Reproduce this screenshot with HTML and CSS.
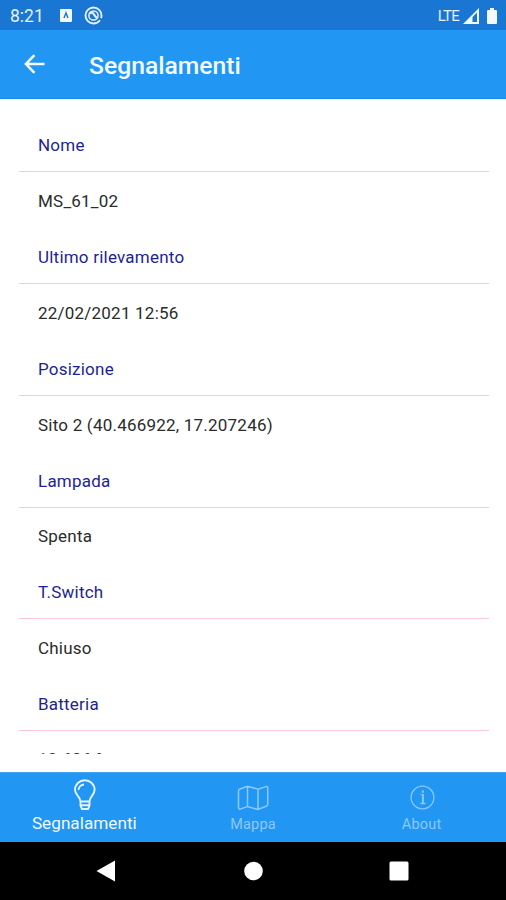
FILE: index.html
```html
<!DOCTYPE html>
<html lang="it">
<head>
<meta charset="utf-8">
<title>Segnalamenti</title>
<link rel="stylesheet" href="styles.css">
</head>
<body>
<div class="screen">
  <div class="status">
    <span class="clock">8:21</span>
    <svg class="app-badge" width="12" height="13" viewBox="0 0 12 13"><rect width="12" height="13" rx="1" fill="#f2f8fe"/><path d="M4 9 6 4l2 5" fill="none" stroke="#1976d2" stroke-width="1.4"/></svg>
    <svg class="sync" width="19" height="19" viewBox="0 0 19 19" fill="none" stroke="#e6f1fc"><circle cx="9.500" cy="9.500" r="8" stroke-width="1.900" stroke-dasharray="48 2.300" stroke-dashoffset="-5"/><circle cx="9.500" cy="9.500" r="4.600" stroke-width="1.500"/><path d="M5.500 7.500q3-2 4.500 1t3.500 3.500" stroke-width="2.200"/></svg>
    <span class="lte">LTE</span>
    <svg class="signal" width="16" height="16" viewBox="0 0 16 16"><path fill="#f2f8fe" fill-rule="evenodd" d="M0 16 16 0v16ZM9.500 9V14h4.500V4.500Z"/></svg>
    <svg class="battery" width="10" height="16" viewBox="0 0 10 16"><path fill="#f2f8fe" d="M3 0h4v2h2q1 0 1 1v12q0 1-1 1H1q-1 0-1-1V3q0-1 1-1h2Z"/></svg>
  </div>
  <header class="bar">
    <svg class="back" width="22" height="20" viewBox="0 0 22 20"><path d="M20.500 10H2M10.500 1.200 1.900 10l8.600 8.800" fill="none" stroke="#f6fbff" stroke-width="2.500"/></svg>
    <h1>Segnalamenti</h1>
  </header>
  <main class="content">
    <dl class="details">
      <dt>Nome</dt><dd>MS_61_02</dd>
      <dt>Ultimo rilevamento</dt><dd>22/02/2021 12:56</dd>
      <dt>Posizione</dt><dd>Sito 2 (40.466922, 17.207246)</dd>
      <dt>Lampada</dt><dd>Spenta</dd>
      <dt>T.Switch</dt><dd>Chiuso</dd>
      <dt>Batteria</dt><dd>12.606 °</dd>
    </dl>
  </main>
  <nav class="tabs">
    <div class="tab active">
      <svg width="24" height="32" viewBox="0 0 24 32" fill="none" stroke="#e4f3ff" stroke-width="1.900"><path d="M8.500 22.500C8.500 17 3 16.500 3 10.800a9.800 9.600 0 0 1 19.600 0c0 5.700-5.100 6.200-5.100 11.700ZM8.500 22.500v4l1.500 3.500h6l1.500-3.500v-4M8.500 26.300h9M6.500 11a6 6 0 0 1 5.500-5.500"/></svg>
      <span>Segnalamenti</span>
    </div>
    <div class="tab">
      <svg width="32" height="26" viewBox="0 0 32 26" fill="none" stroke="#8dc9fa" stroke-width="1.500"><path d="M1.500 6Q1.500 4.500 3 4l7.500-2.800 10.500 3 8-2.600q1.700-.5 1.700 1.200v16.500q0 1.500-1.500 2L21 24.500l-10.500-3-7.300 2.600q-1.700.4-1.700-1.300ZM10.500 1.200v20.300M21 4.200v20.300"/></svg>
      <span>Mappa</span>
    </div>
    <div class="tab">
      <svg width="26" height="26" viewBox="0 0 26 26" fill="none" stroke="#8dc9fa" stroke-width="1.300"><circle cx="13.500" cy="12.500" r="11.400"/><path d="M11.500 9.500h1M11.500 18.500h5"/><path d="M13.900 9v9.500M13.800 5.500v2.200" stroke-width="2"/></svg>
      <span>About</span>
    </div>
  </nav>
  <div class="system-nav">
    <svg width="20" height="22" viewBox="0 0 20 22"><path fill="#fff" d="M19 .5v21L.5 11Z"/></svg>
    <svg width="20" height="20" viewBox="0 0 20 20"><circle cx="10.500" cy="10" r="9.300" fill="#fff"/></svg>
    <svg width="20" height="20" viewBox="0 0 20 20"><rect x=".5" y=".5" width="19" height="19" rx="1.500" fill="#fff"/></svg>
  </div>
</div>
</body>
</html>
```
FILE: styles.css
```css
* { box-sizing: border-box; }
body { margin: 0; background: #fff; font-family: Roboto, "Liberation Sans", sans-serif; }
.screen { width: 506px; height: 900px; display: flex; flex-direction: column; overflow: hidden; }
.status { height: 30px; flex: none; background: #1976d2; color: #e6f1fc; display: flex; align-items: center; padding: 1px 9px 0 10px; }
.clock { font-size: 17.500px; width: 50px; }
.sync { margin-left: 12px; }
.lte { font-size: 15px; letter-spacing: -.8px; margin-left: auto; }
.signal { margin-left: 4px; }
.battery { margin-left: 8px; }
.bar { height: 69px; flex: none; background: #2196f3; border-bottom: 1px solid #1788e5; display: flex; align-items: center; padding: 0 24px; }
.bar h1 { margin: 3px 0 0 43px; color: #f3faff; font-size: 24.700px; font-weight: 500; line-height: 30px; }
.content { height: 655px; flex: none; overflow: hidden; padding: 17.300px 17px 0 19px; }
.details { margin: 0; font-size: 17px; letter-spacing: .22px; }
.details dt, .details dd { height: 55.900px; margin: 0; padding: 2px 19px 0; display: flex; align-items: center; }
.details dt { padding-top: 3px; color: #231f91; border-bottom: 1px solid #fac9d3; }
.details dd { color: #2b2b2b; }
.details dd:last-child { padding-top: 0; }
.tabs { height: 70px; flex: none; margin-top: 18px; background: #2196f3; border-top: 1px solid #46a5f3; display: grid; grid-template-columns: repeat(3, 1fr); }
.tab { display: flex; flex-direction: column; align-items: center; color: #8dc9fa; font-size: 14.500px; line-height: 18px; padding-top: 12px; }
.tab span { margin-top: 5px; letter-spacing: .2px; }
.tab.active { color: #f0f8ff; font-size: 17.200px; padding-top: 6px; }
.tab.active span { margin-top: 3px; letter-spacing: 0; }
.system-nav { flex: 1; background: #000; display: flex; align-items: center; justify-content: space-between; padding: 0 97px 0 96px; }
```
